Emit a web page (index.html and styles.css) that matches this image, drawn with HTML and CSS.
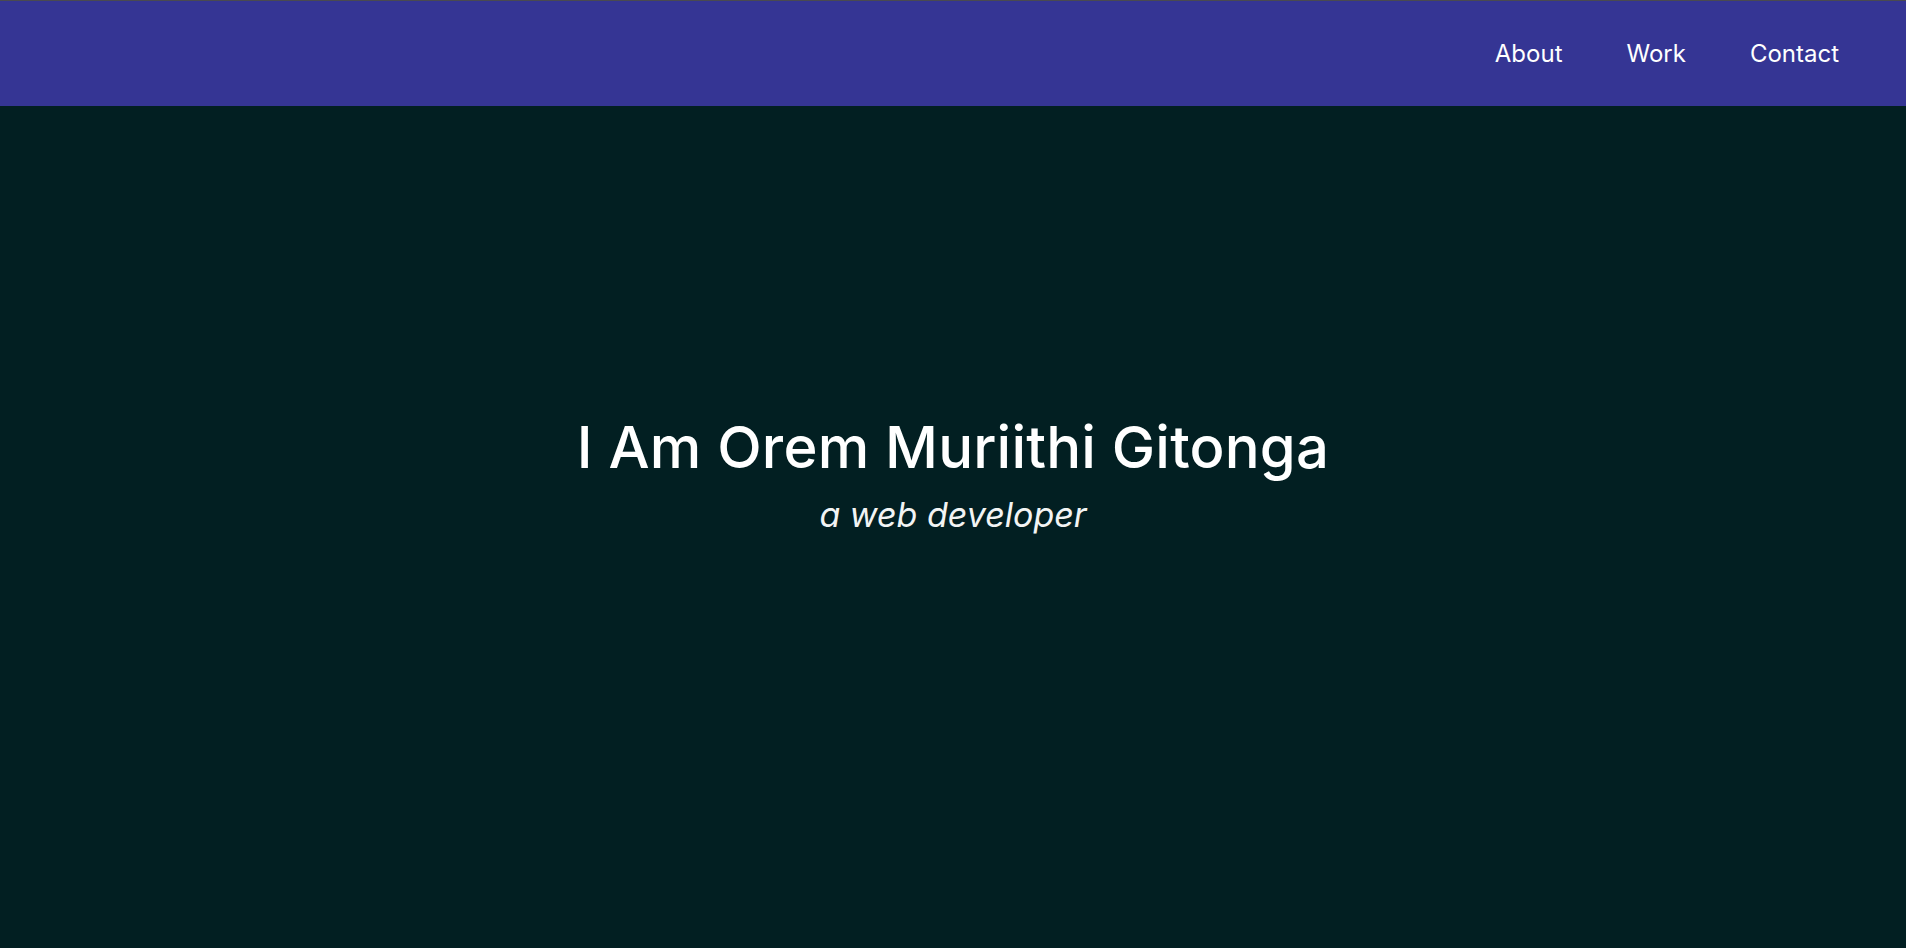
FILE: index.html
```html
<!DOCTYPE html>
<html lang="en">
<head>
<meta charset="utf-8">
<title>Orem Muriithi Gitonga</title>
<link rel="stylesheet" href="styles.css">
</head>
<body>
<header class="site-header">
  <nav class="nav">
    <a class="nav-link" href="#about">About</a>
    <a class="nav-link" href="#work">Work</a>
    <a class="nav-link" href="#contact">Contact</a>
  </nav>
</header>
<main class="hero">
  <h1 class="hero-title">I Am Orem Muriithi Gitonga</h1>
  <p class="hero-sub">a web developer</p>
</main>
</body>
</html>
```
FILE: styles.css
```css
* { box-sizing: border-box; }
html, body { margin: 0; padding: 0; }
body {
  background: #021f22;
  color: #ffffff;
  font-family: Inter, "Open Sans", sans-serif;
  height: 100vh;
  overflow: hidden;
}
.site-header {
  position: fixed;
  top: 0;
  left: 0;
  right: 0;
  height: 106px;
  background: #353594;
  border-top: 1px solid #4a4a50;
  display: flex;
  align-items: center;
  justify-content: flex-end;
  padding-right: 35px;
}
.nav { display: flex; }
.nav-link {
  color: #ffffff;
  text-decoration: none;
  font-size: 24px;
  font-weight: 400;
  padding: 0 32px;
}
.hero {
  height: 100vh;
  display: flex;
  flex-direction: column;
  align-items: center;
  justify-content: center;
  text-align: center;
}
.hero-title {
  margin: 0;
  font-size: 58px;
  font-weight: 500;
  line-height: 1.2;
  letter-spacing: 0.2px;
}
.hero-sub {
  margin: 12px 0 0;
  font-size: 34px;
  font-style: italic;
  font-weight: 400;
  color: #f2f4f4;
}
```
